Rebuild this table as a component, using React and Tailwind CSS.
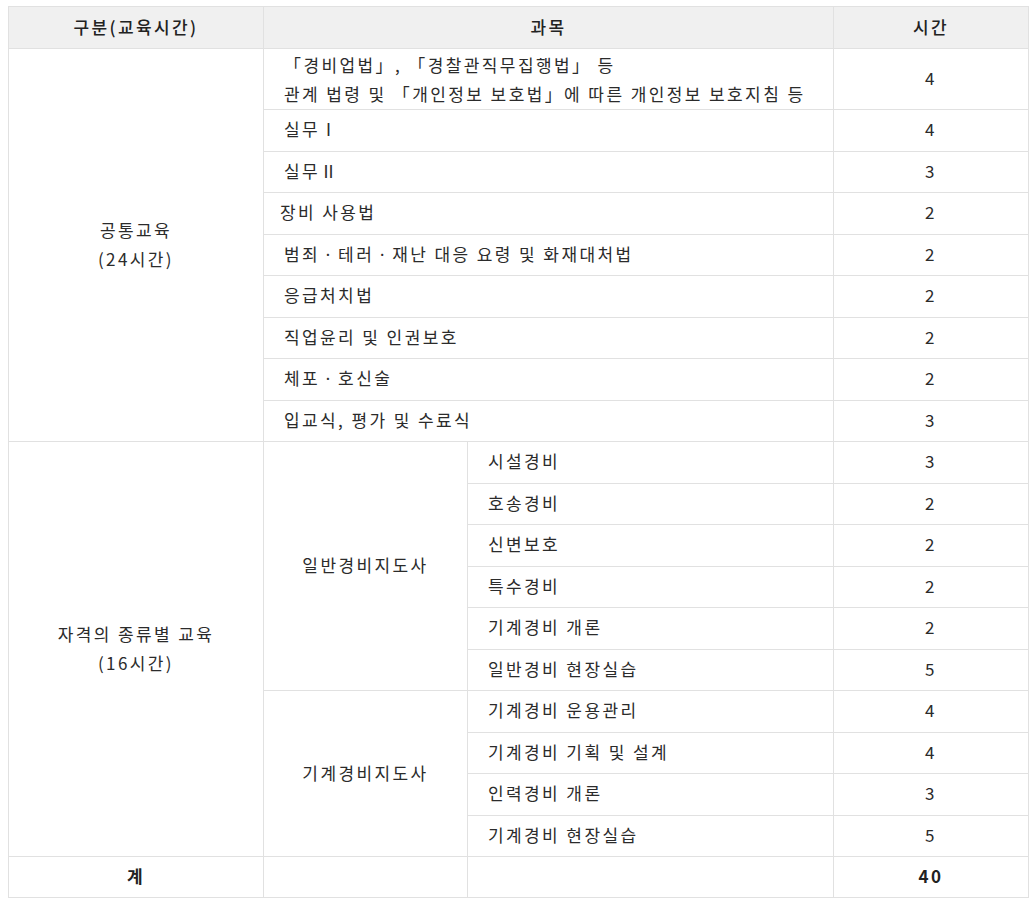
const COMMON = [
  { subject: '실무Ⅰ', hours: 4 },
  { subject: '실무Ⅱ', hours: 3 },
  { subject: '장비 사용법', hours: 2, tight: true },
  { subject: '범죄ㆍ테러ㆍ재난 대응 요령 및 화재대처법', hours: 2 },
  { subject: '응급처치법', hours: 2 },
  { subject: '직업윤리 및 인권보호', hours: 2 },
  { subject: '체포ㆍ호신술', hours: 2 },
  { subject: '입교식, 평가 및 수료식', hours: 3 },
];

const GENERAL = [
  { subject: '시설경비', hours: 3 },
  { subject: '호송경비', hours: 2 },
  { subject: '신변보호', hours: 2 },
  { subject: '특수경비', hours: 2 },
  { subject: '기계경비 개론', hours: 2 },
  { subject: '일반경비 현장실습', hours: 5 },
];

const MACHINE = [
  { subject: '기계경비 운용관리', hours: 4 },
  { subject: '기계경비 기획 및 설계', hours: 4 },
  { subject: '인력경비 개론', hours: 3 },
  { subject: '기계경비 현장실습', hours: 5 },
];

const cell = 'border border-[#e1e1e1] align-middle pb-[3px]';

export default function App() {
  return (
    <div
      className="bg-white pl-2 pt-[6px] pb-2 text-[17px] leading-[29px] tracking-[2.4px] text-[#2b2b2b]"
      style={{ fontFamily: '"Noto Sans CJK KR", "Liberation Sans", sans-serif' }}
    >
      <table className="table-fixed border-collapse w-[1020px]">
        <colgroup>
          <col className="w-[255px]" />
          <col className="w-[204px]" />
          <col className="w-[366px]" />
          <col className="w-[195px]" />
        </colgroup>
        <thead>
          <tr className="h-[42px] bg-[#f0f0f0]">
            <th className={`${cell} font-medium text-[#222]`}>구분(교육시간)</th>
            <th colSpan={2} className={`${cell} font-medium text-[#222]`}>과목</th>
            <th className={`${cell} font-medium text-[#222]`}>시간</th>
          </tr>
        </thead>
        <tbody>
          <tr className="h-[61px]">
            <td rowSpan={9} className={`${cell} text-center`}>
              공통교육<br />(24시간)
            </td>
            <td colSpan={2} className="border border-[#e1e1e1] align-middle pl-5">
              「경비업법」, 「경찰관직무집행법」 등<br />
              관계 법령 및 「개인정보 보호법」에 따른 개인정보 보호지침 등
            </td>
            <td className={`${cell} text-center`}>4</td>
          </tr>
          {COMMON.map(r => (
            <tr key={r.subject} className="h-[41.5px]">
              <td colSpan={2} className={`${cell} ${r.tight ? 'pl-4' : 'pl-5'}`}>{r.subject}</td>
              <td className={`${cell} text-center`}>{r.hours}</td>
            </tr>
          ))}
          {GENERAL.map((r, i) => (
            <tr key={r.subject} className="h-[41.5px]">
              {i === 0 && (
                <td rowSpan={10} className={`${cell} text-center`}>
                  자격의 종류별 교육<br />(16시간)
                </td>
              )}
              {i === 0 && (
                <td rowSpan={6} className={`${cell} text-center`}>일반경비지도사</td>
              )}
              <td className={`${cell} pl-5`}>{r.subject}</td>
              <td className={`${cell} text-center`}>{r.hours}</td>
            </tr>
          ))}
          {MACHINE.map((r, i) => (
            <tr key={r.subject} className="h-[41.5px]">
              {i === 0 && (
                <td rowSpan={4} className={`${cell} text-center`}>기계경비지도사</td>
              )}
              <td className={`${cell} pl-5`}>{r.subject}</td>
              <td className={`${cell} text-center`}>{r.hours}</td>
            </tr>
          ))}
          <tr className="h-[41px]">
            <td className={`${cell} text-center font-bold text-[#222]`}>계</td>
            <td className={cell}></td>
            <td className={cell}></td>
            <td className={`${cell} text-center font-bold text-[#222]`}>40</td>
          </tr>
        </tbody>
      </table>
    </div>
  );
}
